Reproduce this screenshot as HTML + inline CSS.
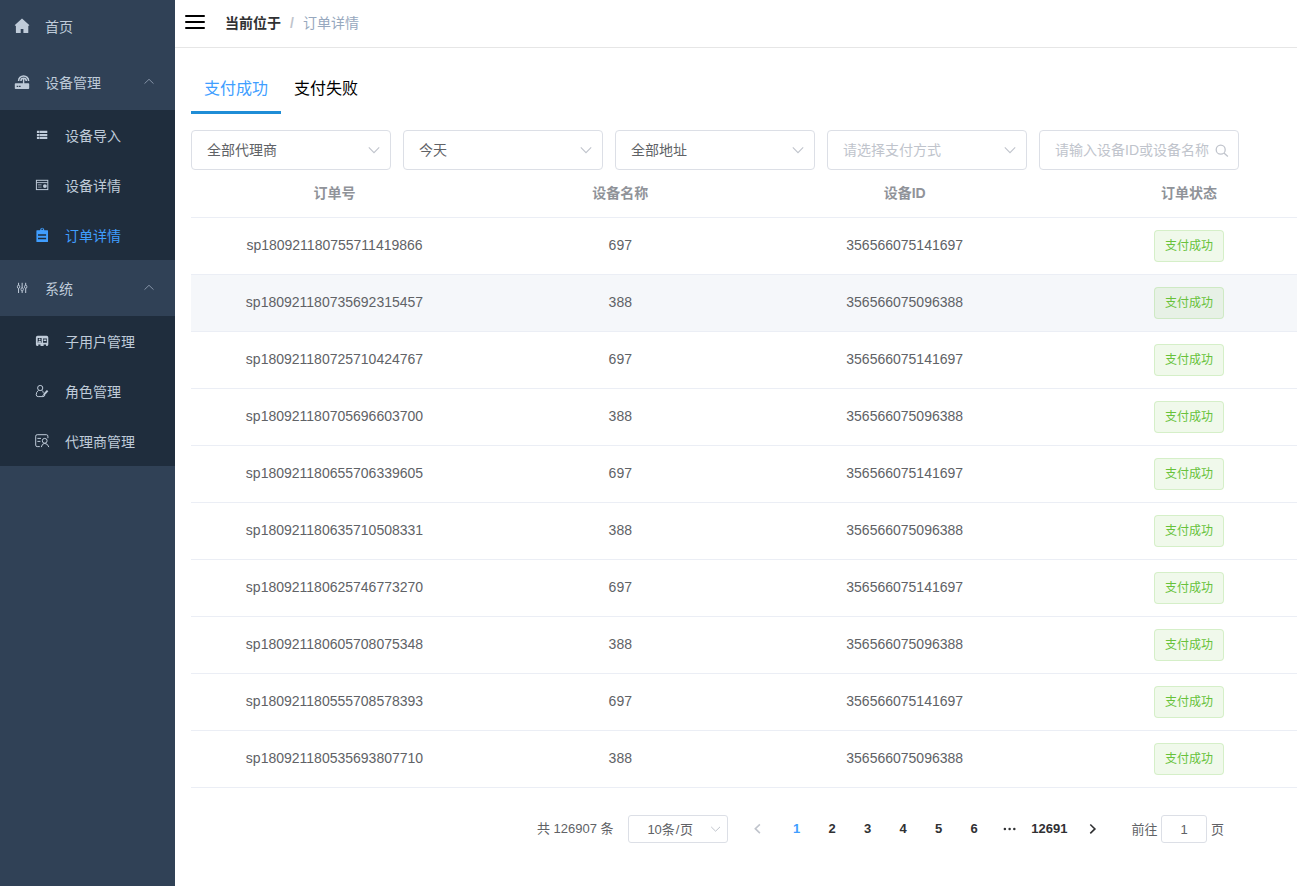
<!DOCTYPE html>
<html lang="zh-CN">
<head>
<meta charset="utf-8">
<title>订单详情</title>
<style>
*{box-sizing:border-box;margin:0;padding:0}
html,body{width:1297px;height:886px;overflow:hidden;background:#fff}
body{font-family:"Liberation Sans","Noto Sans CJK SC",sans-serif;font-size:14px;color:#606266;position:relative}
svg{display:block}
/* ---------- sidebar ---------- */
.side{position:absolute;left:0;top:0;width:175px;height:886px;background:#304156;color:#bfcbd9;font-size:14px}
.mi{position:absolute;left:0;width:175px;height:56px}
.mi .tx{position:absolute;left:45px;top:1px;line-height:56px;white-space:nowrap}
.mi .ic{position:absolute}
.sub{position:absolute;left:0;width:175px;background:#1f2d3d}
.si{position:relative;height:50px}
.si .tx{position:absolute;left:65px;top:1px;line-height:50px;white-space:nowrap}
.si .ic{position:absolute}
.si.on{color:#409eff}
.arr{position:absolute;left:143px}
/* ---------- header ---------- */
.head{position:absolute;left:175px;top:0;width:1122px;height:48px;border-bottom:1px solid #e6e6e6;background:#fff}
.ham{position:absolute;left:10px;top:15px;width:20px;height:14px}
.ham i{position:absolute;left:0;width:20px;height:2px;background:#000;border-radius:1px}
.bc{position:absolute;left:50px;top:0;line-height:47px;font-size:14px;white-space:nowrap}
.bc b{color:#303133;font-weight:700}
.bc .sep{color:#c0c4cc;margin:0 9px 0 9px;font-weight:700}
.bc .cur{color:#97a8be}
/* ---------- tabs ---------- */
.tabs{position:absolute;left:191px;top:64px;height:50px;white-space:nowrap;font-size:16px}
.tab{position:absolute;top:1px;line-height:48px;color:#000}
.tab.on{color:#409eff}
.tabbar{position:absolute;left:0;top:47px;width:90px;height:3px;background:#1f8dd6}
/* ---------- filters ---------- */
.sel{position:absolute;top:130px;width:200px;height:40px;border:1px solid #dcdfe6;border-radius:4px;background:#fff;font-size:14px;line-height:38px;padding-left:15px;color:#606266;white-space:nowrap}
.sel.ph{color:#c0c4cc}
.sel svg{position:absolute;right:10.5px;top:13px}
/* ---------- table ---------- */
.tb{position:absolute;left:191px;top:170px;width:1140px}
.tr{position:relative;height:57px;border-bottom:1px solid #ebeef5}
.tr.h{height:48px;font-weight:700;color:#909399}
.tr.hv{background:#f5f7fa}
.td{position:absolute;top:-1px;width:286px;text-align:center;line-height:56px;white-space:nowrap}
.tr.h .td{line-height:46px;top:0}
.c1{left:.5px}.c2{left:286.3px}.c3{left:570.7px}.c4{left:855px}
.tag{display:inline-block;vertical-align:middle;height:32px;line-height:30px;padding:0 10px;font-size:12px;color:#67c23a;background:rgba(103,194,58,.1);border:1px solid rgba(103,194,58,.2);border-radius:4px;position:relative;top:0}
/* ---------- pagination ---------- */
.pg{position:absolute;left:0;top:815px;width:1297px;height:28px;font-size:13px;color:#606266}
.pg span,.pg div{position:absolute;top:0;line-height:28px;white-space:nowrap}
.pg .n{font-weight:700;color:#303133;width:30px;text-align:center}
.pg .n.on{color:#409eff}
.pg .box{border:1px solid #dcdfe6;border-radius:3px;height:28px;line-height:26px;text-align:center}
</style>
</head>
<body>
<!-- SIDEBAR -->
<div class="side" id="side">
  <div class="mi" style="top:-2px">
    <svg class="ic" style="left:14px;top:20px" width="16" height="16" viewBox="0 0 16 16"><path fill="#bfcbd9" d="M8 0.6 L0.9 7.1 Q0.6 7.6 1.2 7.7 H1.9 V14.6 Q1.9 15.1 2.4 15.1 H6.7 V10.9 H9.4 V15.1 H13.8 Q14.3 15.1 14.3 14.6 V7.7 H14.9 Q15.5 7.6 15.2 7.1 Z"/></svg>
    <div class="tx">首页</div>
  </div>
  <div class="mi" style="top:54px">
    <svg class="ic" style="left:14px;top:20px" width="16" height="16" viewBox="0 0 16 16"><g fill="none" stroke="#bfcbd9" stroke-width="1.5"><path d="M4.6 6.9 A5 5 0 0 1 14.6 6.9"/><path d="M6.9 6.9 A2.7 2.7 0 0 1 12.3 6.9"/></g><rect x="8.9" y="5" width="1.4" height="5" fill="#bfcbd9"/><path fill="#bfcbd9" fill-rule="evenodd" d="M1.6 9.3 H14.4 Q15.2 9.3 15.2 10.1 V14.3 Q15.2 15.1 14.4 15.1 H1.6 Q0.8 15.1 0.8 14.3 V10.1 Q0.8 9.3 1.6 9.3 Z M2.7 11.7 V13.1 H4.2 V11.7 Z M4.9 11.7 V13.1 H6.6 V11.7 Z"/></svg>
    <div class="tx">设备管理</div>
    <svg class="arr" style="left:143px;top:23px" width="12" height="8" viewBox="0 0 12 8"><path d="M1.5 6.6 L6 2.3 L10.5 6.6" fill="none" stroke="#8492a6" stroke-width="1"/></svg>
  </div>
  <div class="sub" style="top:110px;height:150px">
    <div class="si">
      <svg class="ic" style="left:36px;top:20px" width="12" height="10" viewBox="0 0 12 10"><path fill="#bfcbd9" d="M0.9 0.8h2.1v2.3h-2.1z M3.4 0.8h7.9v2.3h-7.9z M0.9 3.9h2.1v2.2h-2.1z M3.4 3.9h7.9v2.2h-7.9z M0.9 6.8h2.1v2.3h-2.1z M3.4 6.8h7.9v2.3h-7.9z"/></svg>
      <div class="tx">设备导入</div>
    </div>
    <div class="si">
      <svg class="ic" style="left:35px;top:19px" width="14" height="12" viewBox="0 0 14 12"><rect x="1.4" y="1.3" width="11.4" height="9.3" fill="none" stroke="#bfcbd9" stroke-width="1"/><path d="M1.4 3.6 H12.8" stroke="#bfcbd9" stroke-width="0.9"/><path d="M2.8 5.5h3.8 M2.8 6.9h3.8 M2.8 8.3h3.8" stroke="#7f8b9b" stroke-width="0.8"/><circle cx="9.9" cy="7.1" r="1.9" fill="#bfcbd9"/></svg>
      <div class="tx">设备详情</div>
    </div>
    <div class="si on">
      <svg class="ic" style="left:36px;top:17px" width="13" height="16" viewBox="0 0 13 16"><path fill="#409eff" fill-rule="evenodd" d="M0.9 3.2 H4 Q4.2 0.7 6.2 0.7 Q8.2 0.7 8.4 3.2 H11.5 Q12 3.2 12 3.7 V14.5 Q12 15 11.5 15 H0.9 Q0.4 15 0.4 14.5 V3.7 Q0.4 3.2 0.9 3.2 Z M5.3 2.3 A0.9 0.7 0 1 0 7.1 2.3 A0.9 0.7 0 1 0 5.3 2.3 Z M2 7.2 V8.8 H10.1 V7.2 Z M2 10.7 V12.2 H10.1 V10.7 Z"/></svg>
      <div class="tx">订单详情</div>
    </div>
  </div>
  <div class="mi" style="top:260px">
    <svg class="ic" style="left:16px;top:22px" width="12" height="12" viewBox="0 0 12 12"><g stroke="#bfcbd9" stroke-width="1" fill="none"><path d="M2.55 0.8 V11 M6.15 0.8 V11 M9.7 0.8 V11"/></g><g fill="#304156" stroke="#bfcbd9" stroke-width="0.9"><ellipse cx="2.55" cy="4.8" rx="1.2" ry="1.6"/><ellipse cx="6.15" cy="7.3" rx="1.2" ry="1.6"/><ellipse cx="9.7" cy="4.8" rx="1.2" ry="1.6"/></g></svg>
    <div class="tx">系统</div>
    <svg class="arr" style="left:143px;top:23px" width="12" height="8" viewBox="0 0 12 8"><path d="M1.5 6.6 L6 2.3 L10.5 6.6" fill="none" stroke="#8492a6" stroke-width="1"/></svg>
  </div>
  <div class="sub" style="top:316px;height:150px">
    <div class="si">
      <svg class="ic" style="left:35px;top:19px" width="14" height="12" viewBox="0 0 14 12"><path fill="#bfcbd9" fill-rule="evenodd" d="M2.6 0.8 H11.6 Q13.3 0.8 13.3 2.5 V9.4 Q13.3 11.1 11.6 11.1 H2.6 Q0.9 11.1 0.9 9.4 V2.5 Q0.9 0.8 2.6 0.8 Z M2.7 3 V7.7 H6.6 V3 Z M8 3.6 V7.7 H11.9 V3.6 Z M3.3 9.6 V11.1 H5.5 V9.6 Z M8.6 9.6 V11.1 H11.1 V9.6 Z"/><circle cx="4.65" cy="4.4" r="0.9" fill="#bfcbd9"/><path d="M3 7.7 Q3 5.8 4.65 5.8 Q6.3 5.8 6.3 7.7 Z" fill="#bfcbd9"/><rect x="8.6" y="4.5" width="2.7" height="1.5" fill="#bfcbd9"/></svg>
      <div class="tx">子用户管理</div>
    </div>
    <div class="si">
      <svg class="ic" style="left:35px;top:18px" width="14" height="14" viewBox="0 0 14 14"><g fill="none" stroke="#bfcbd9" stroke-width="1"><circle cx="5.2" cy="4" r="2.6"/><path d="M3.5 6.3 Q1.2 8 1.2 10.8 Q1.3 12.6 3.2 12.6 H8 Q9.6 12.5 9.9 11"/><path d="M6.9 6.3 Q8 7.2 8.3 8.8"/></g><path d="M12.6 6.6 L8.7 10.9" stroke="#bfcbd9" stroke-width="2" fill="none"/><path d="M8.9 10.6 L7.5 12" stroke="#bfcbd9" stroke-width="1" fill="none"/></svg>
      <div class="tx">角色管理</div>
    </div>
    <div class="si">
      <svg class="ic" style="left:35px;top:18px" width="15" height="14" viewBox="0 0 15 14"><g fill="none" stroke="#bfcbd9" stroke-width="1"><path d="M4.8 12.6 H2.2 Q0.7 12.6 0.7 11.1 V2.2 Q0.7 0.7 2.2 0.7 H11.4 Q12.9 0.7 12.9 2.2 V4.2"/><path d="M2.4 4.4 H6 M2.4 7.4 H5.4"/><circle cx="9.7" cy="6.8" r="2.4"/><path d="M6.3 13.1 Q7 9.4 9.7 9.4 Q12.6 9.4 13.9 13.1"/></g></svg>
      <div class="tx">代理商管理</div>
    </div>
  </div>
</div>
<!-- HEADER -->
<div class="head">
  <div class="ham"><i style="top:0"></i><i style="top:6px"></i><i style="top:12px"></i></div>
  <div class="bc"><b>当前位于</b><span class="sep">/</span><span class="cur">订单详情</span></div>
</div>
<!-- TABS -->
<div class="tabs">
  <div class="tab on" style="left:13px">支付成功</div>
  <div class="tab" style="left:103px">支付失败</div>
  <div class="tabbar"></div>
</div>
<!-- FILTERS -->
<div id="filters">
  <div class="sel" style="left:191px">全部代理商<svg width="12" height="12" viewBox="0 0 12 12"><path d="M0.8 3.4 L6 8.6 L11.2 3.4" fill="none" stroke="#c0c4cc" stroke-width="1.1"/></svg></div>
  <div class="sel" style="left:403px">今天<svg width="12" height="12" viewBox="0 0 12 12"><path d="M0.8 3.4 L6 8.6 L11.2 3.4" fill="none" stroke="#c0c4cc" stroke-width="1.1"/></svg></div>
  <div class="sel" style="left:615px">全部地址<svg width="12" height="12" viewBox="0 0 12 12"><path d="M0.8 3.4 L6 8.6 L11.2 3.4" fill="none" stroke="#c0c4cc" stroke-width="1.1"/></svg></div>
  <div class="sel ph" style="left:827px">请选择支付方式<svg width="12" height="12" viewBox="0 0 12 12"><path d="M0.8 3.4 L6 8.6 L11.2 3.4" fill="none" stroke="#c0c4cc" stroke-width="1.1"/></svg></div>
  <div class="sel ph" style="left:1039px">请输入设备ID或设备名称<svg style="right:auto;left:175px;top:12px" width="14" height="14" viewBox="0 0 14 14"><circle cx="5.7" cy="6.7" r="4.5" fill="none" stroke="#c0c4cc" stroke-width="1.3"/><path d="M8.9 9.9 L12.9 13.5" stroke="#c0c4cc" stroke-width="1.3"/></svg></div>
</div>
<!-- TABLE -->
<div class="tb" id="tb">
  <div class="tr h"><div class="td c1">订单号</div><div class="td c2">设备名称</div><div class="td c3">设备ID</div><div class="td c4">订单状态</div></div>
  <div class="tr"><div class="td c1">sp180921180755711419866</div><div class="td c2">697</div><div class="td c3">356566075141697</div><div class="td c4"><span class="tag">支付成功</span></div></div>
  <div class="tr hv"><div class="td c1">sp180921180735692315457</div><div class="td c2">388</div><div class="td c3">356566075096388</div><div class="td c4"><span class="tag">支付成功</span></div></div>
  <div class="tr"><div class="td c1">sp180921180725710424767</div><div class="td c2">697</div><div class="td c3">356566075141697</div><div class="td c4"><span class="tag">支付成功</span></div></div>
  <div class="tr"><div class="td c1">sp180921180705696603700</div><div class="td c2">388</div><div class="td c3">356566075096388</div><div class="td c4"><span class="tag">支付成功</span></div></div>
  <div class="tr"><div class="td c1">sp180921180655706339605</div><div class="td c2">697</div><div class="td c3">356566075141697</div><div class="td c4"><span class="tag">支付成功</span></div></div>
  <div class="tr"><div class="td c1">sp180921180635710508331</div><div class="td c2">388</div><div class="td c3">356566075096388</div><div class="td c4"><span class="tag">支付成功</span></div></div>
  <div class="tr"><div class="td c1">sp180921180625746773270</div><div class="td c2">697</div><div class="td c3">356566075141697</div><div class="td c4"><span class="tag">支付成功</span></div></div>
  <div class="tr"><div class="td c1">sp180921180605708075348</div><div class="td c2">388</div><div class="td c3">356566075096388</div><div class="td c4"><span class="tag">支付成功</span></div></div>
  <div class="tr"><div class="td c1">sp180921180555708578393</div><div class="td c2">697</div><div class="td c3">356566075141697</div><div class="td c4"><span class="tag">支付成功</span></div></div>
  <div class="tr"><div class="td c1">sp180921180535693807710</div><div class="td c2">388</div><div class="td c3">356566075096388</div><div class="td c4"><span class="tag">支付成功</span></div></div>
</div>
<!-- PAGINATION -->
<div class="pg" id="pg">
  <span style="left:537px">共 126907 条</span>
  <div class="box" style="left:628px;width:100px;text-align:left;padding-left:18.4px;line-height:28px">10条<i style="font-style:normal;margin:0 .8px">/</i>页<svg style="position:absolute;left:81px;top:9px" width="11" height="8" viewBox="0 0 11 8"><path d="M1.2 1.9 L5.6 6.2 L10 1.9" fill="none" stroke="#c0c4cc" stroke-width="1"/></svg></div>
  <svg style="position:absolute;left:753px;top:8px" width="9" height="12" viewBox="0 0 9 12"><path d="M6.9 1.3 L2.3 5.7 L6.9 10.1" fill="none" stroke="#c0c4cc" stroke-width="1.6"/></svg>
  <span class="n on" style="left:781.6px;width:30px">1</span>
  <span class="n" style="left:817.1px;width:30px">2</span>
  <span class="n" style="left:852.6px;width:30px">3</span>
  <span class="n" style="left:888.1px;width:30px">4</span>
  <span class="n" style="left:923.6px;width:30px">5</span>
  <span class="n" style="left:959.1px;width:30px">6</span>
  <svg style="position:absolute;left:1003px;top:12px" width="14" height="4" viewBox="0 0 14 4"><circle cx="1.9" cy="1.9" r="1.25" fill="#303133"/><circle cx="6.6" cy="1.9" r="1.25" fill="#303133"/><circle cx="11.3" cy="1.9" r="1.25" fill="#303133"/></svg>
  <span class="n" style="left:1027.4px;width:44px">12691</span>
  <svg style="position:absolute;left:1088px;top:8px" width="9" height="12" viewBox="0 0 9 12"><path d="M2.3 1.5 L6.9 5.9 L2.3 10.3" fill="none" stroke="#303133" stroke-width="1.6"/></svg>
  <span style="left:1131.5px;top:1px">前往</span>
  <div class="box" style="left:1161px;width:46px;line-height:27px">1</div>
  <span style="left:1211px;top:1px">页</span>
</div>
</body>
</html>
